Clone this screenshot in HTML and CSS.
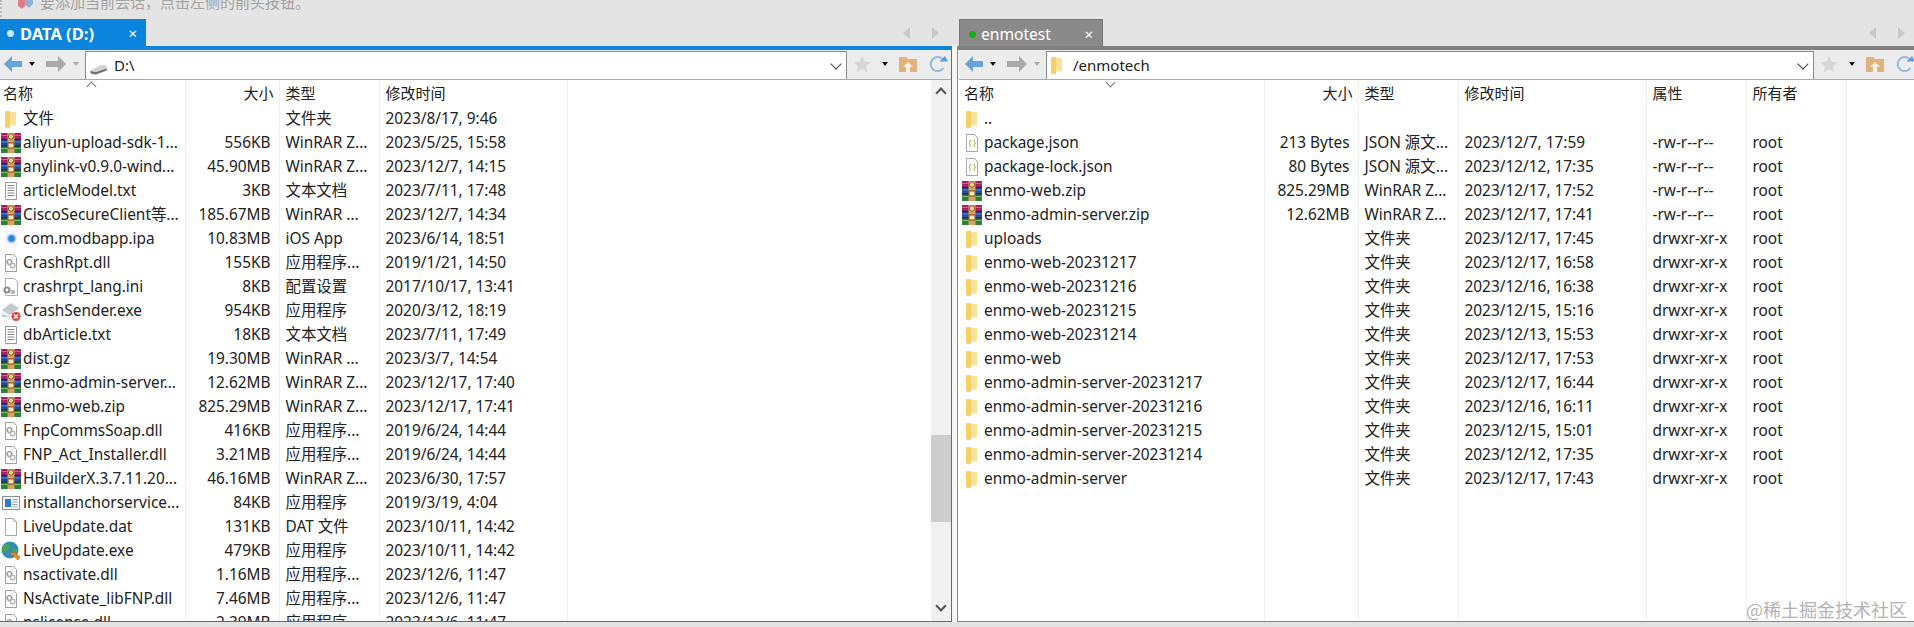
FILE: index.html
```html
<!DOCTYPE html>
<html lang="zh-CN">
<head>
    <meta charset="UTF-8">
    <title>enmotest - SFTP</title>
    <link rel="stylesheet" href="styles.css">
</head>
<body>
    <svg class="defs" width="0" height="0">
        <symbol id="rar" viewBox="0 0 20 20">
            <rect width="20" height="6.5" fill="#a3245f"/>
            <rect y="2" width="20" height="1" fill="#d85b8e"/>
            <rect y="6.5" width="20" height="6.5" fill="#26489f"/>
            <rect y="8.5" width="20" height="1" fill="#5f84d8"/>
            <rect y="13" width="20" height="7" fill="#2c7f3a"/>
            <rect y="15" width="20" height="1" fill="#6fc06f"/>
            <rect y="6" width="20" height="1" fill="#222"/>
            <rect y="12.6" width="20" height="1" fill="#222"/>
            <rect x="6.5" width="7" height="20" fill="#d9a25c"/>
            <rect x="7.5" y="1" width="5" height="5" rx="2" fill="#f4d58a" stroke="#7a4a20" stroke-width=".8"/>
            <rect x="7" y="10" width="6" height="5" fill="#f2e3b0" stroke="#5a3a18" stroke-width=".8"/>
        </symbol>
        <symbol id="folder" viewBox="0 0 20 20">
            <path d="M4 2.5 9 2v1h6v13.5H9V19l-5-.5z" fill="#fbe29a"/>
            <path d="M4 2.5 9 2v17l-5-.5z" fill="#f6cf66"/>
        </symbol>
        <symbol id="txt" viewBox="0 0 20 20">
            <path d="M4.5 1.5h11v17h-11z" fill="#fff" stroke="#9a9a9a"/>
            <path d="M6.5 4.5h7M6.5 7h7M6.5 9.500h7M6.5 12h7M6.5 14.500h7" stroke="#8a8a8a"/>
        </symbol>
        <symbol id="dll" viewBox="0 0 20 20">
            <path d="M4.5 1.500h8l3 3v14h-11z" fill="#fff" stroke="#a0a0a0"/>
            <circle cx="8.500" cy="9" r="2.400" fill="none" stroke="#9a9a9a" stroke-width="1.300"/>
            <circle cx="11.500" cy="12.500" r="2.400" fill="none" stroke="#b0b0b0" stroke-width="1.300"/>
        </symbol>
        <symbol id="ini" viewBox="0 0 20 20">
            <path d="M4.500 1.500h9l3 3v14h-12z" fill="#fff" stroke="#b0b0b0"/>
            <circle cx="6" cy="13" r="3.600" fill="#8f8f8f"/>
            <circle cx="6" cy="13" r="1.400" fill="#fff"/>
            <circle cx="12" cy="15" r="2.200" fill="#b4b4b4"/>
        </symbol>
        <symbol id="blank" viewBox="0 0 20 20">
            <path d="M4.500 1.500h8l3 3v14h-11z" fill="#fff" stroke="#a8a8a8"/>
            <path d="M12.500 1.500v3h3" fill="none" stroke="#c4c4c4"/>
        </symbol>
        <symbol id="ipa" viewBox="0 0 20 20">
            <path d="M4 1h12v18H4z" fill="#f3f7fd"/>
            <circle cx="10.500" cy="9.500" r="4.800" fill="#a8cdf2"/>
            <circle cx="10.500" cy="9.500" r="3.200" fill="#2f7fe0"/>
        </symbol>
        <symbol id="crash" viewBox="0 0 20 20">
            <path d="M1 9 10 2l8 5v9H1z" fill="#c6c9ce"/>
            <path d="M1 9l8 5 9-7v4l-9 5-8-3z" fill="#eef0f2"/>
            <circle cx="15" cy="15.500" r="4.500" fill="#dc4a3c"/>
            <path d="M13 13.500l4 4m0-4-4 4" stroke="#fff" stroke-width="1.400"/>
        </symbol>
        <symbol id="win" viewBox="0 0 20 20">
            <rect x="1.500" y="3.500" width="17" height="13" fill="#f4f6f8" stroke="#8a8f96"/>
            <rect x="4" y="6" width="6" height="8" fill="#2a78d8"/>
            <path d="M11.500 6.500h5M11.500 9h5M11.500 11.500h5M11.500 14h5" stroke="#9aa4b0"/>
        </symbol>
        <symbol id="globe" viewBox="0 0 20 20">
            <circle cx="9" cy="9" r="8.500" fill="#2a8fc4"/>
            <path d="M3 4c3-2 5-1 6 1s-1 3-3 4-2 4-4 3-1-6 1-8zM11 8c3-1 5 0 6 2l-2 4-3-1z" fill="#4ea24a"/>
            <path d="M9 11l3 1 1-1 6 5-2 3-5-5-1 2z" fill="#ec8a1e" stroke="#a85a10" stroke-width=".5"/>
        </symbol>
        <symbol id="json" viewBox="0 0 20 20">
            <path d="M4.500 1.500h8l3 3v14h-11z" fill="#fff" stroke="#a8a8a8"/>
            <path d="M9 7c-1.200 0-1 .6-1 2s-.4 1.400-1 1.500c.6.1 1 .2 1 1.500s-.2 2 1 2M11.500 7c1.200 0 1 .6 1 2s.4 1.400 1 1.500c-.6.1-1 .2-1 1.500s.2 2-1 2" fill="none" stroke="#8fae5a"/>
        </symbol>
        <symbol id="drive" viewBox="0 0 20 12">
            <path d="M1 7 13 1h5.500L19 5 7 11.500H2z" fill="#d2d2d2"/>
            <path d="M1 7.500 7 9l12-4v2L7 11.500 1.500 10z" fill="#6f6f6f"/>
        </symbol>
        <symbol id="back" viewBox="0 0 18 16">
            <path d="M8 0v5h10v6H8v5L0 8z" fill="#68a4da"/>
        </symbol>
        <symbol id="forward" viewBox="0 0 20 16">
            <path d="M12 0v5H0v6h12v5l8-8z" fill="#a9a9a9"/>
        </symbol>
        <symbol id="star" viewBox="0 0 18 18">
            <path d="M9 1l2.500 5.500 6 .7-4.500 4 1.300 6L9 14.200 3.700 17.200l1.300-6-4.500-4 6-.7z" fill="#d6d6d6"/>
        </symbol>
        <symbol id="folderup" viewBox="0 0 18 16">
            <path d="M0 1h7l2 2h9v13H0z" fill="#e3b27c"/>
            <path d="M9 6l5 5h-3v5H7v-5H4z" fill="#fbf2e6"/>
        </symbol>
        <symbol id="refresh" viewBox="0 0 20 18">
            <path d="M14.500 4A7 7 0 1 0 15.500 13" fill="none" stroke="#8dbbe4" stroke-width="2"/>
            <path d="M11.500 6.500h8.500L17 1z" fill="#5f9bd6"/>
        </symbol>
    </svg>

    <div class="hint">
        <span class="hint-dots"></span>
        <svg class="hint-flag" viewBox="0 0 16 10"><path d="M0 0h7l1 5-4 4-4-3z" fill="#e57b82"/><path d="M7 0h8v4l-4 4-3-3z" fill="#8fb0da"/></svg>
        <span class="hint-text">要添加当前会话，点击左侧的前头按钮。</span>
    </div>

    <div class="panes">
        <section class="pane pane-left">
            <div class="tabs">
                <div class="tab tab-active"><i class="dot"></i><span class="tab-title">DATA (D:)</span><span class="tab-close">×</span></div>
                <div class="tab-nav"><i class="nav-left"></i><i class="nav-right"></i></div>
            </div>
            <div class="pane-body">
                <div class="toolbar">
                    <svg class="tb-back"><use href="#back"/></svg><i class="caret"></i>
                    <svg class="tb-forward"><use href="#forward"/></svg><i class="caret caret-off"></i>
                    <div class="address">
                        <svg class="addr-drive"><use href="#drive"/></svg>
                        <span class="addr-text">D:\</span>
                        <i class="chevron"></i>
                    </div>
                    <div class="tb-right">
                        <svg class="tb-star"><use href="#star"/></svg><i class="caret"></i>
                        <svg class="tb-up"><use href="#folderup"/></svg>
                        <svg class="tb-refresh"><use href="#refresh"/></svg>
                    </div>
                </div>
                <div class="list">
                    <div class="list-main">
                        <i class="sort sort-up"></i>
                        <table class="files">
                            <colgroup><col class="c-name-l"><col class="c-size"><col class="c-type"><col class="c-time"><col></colgroup>
                            <thead><tr><th>名称</th><th class="num">大小</th><th>类型</th><th>修改时间</th><th></th></tr></thead>
                            <tbody>
                                <tr><td><svg class="ico"><use href="#folder"/></svg>文件</td><td class="num"></td><td>文件夹</td><td>2023/8/17, 9:46</td><td></td></tr>
                                <tr><td><svg class="ico"><use href="#rar"/></svg>aliyun-upload-sdk-1...</td><td class="num">556KB</td><td>WinRAR Z...</td><td>2023/5/25, 15:58</td><td></td></tr>
                                <tr><td><svg class="ico"><use href="#rar"/></svg>anylink-v0.9.0-wind...</td><td class="num">45.90MB</td><td>WinRAR Z...</td><td>2023/12/7, 14:15</td><td></td></tr>
                                <tr><td><svg class="ico"><use href="#txt"/></svg>articleModel.txt</td><td class="num">3KB</td><td>文本文档</td><td>2023/7/11, 17:48</td><td></td></tr>
                                <tr><td><svg class="ico"><use href="#rar"/></svg>CiscoSecureClient等...</td><td class="num">185.67MB</td><td>WinRAR ...</td><td>2023/12/7, 14:34</td><td></td></tr>
                                <tr><td><svg class="ico"><use href="#ipa"/></svg>com.modbapp.ipa</td><td class="num">10.83MB</td><td>iOS App</td><td>2023/6/14, 18:51</td><td></td></tr>
                                <tr><td><svg class="ico"><use href="#dll"/></svg>CrashRpt.dll</td><td class="num">155KB</td><td>应用程序...</td><td>2019/1/21, 14:50</td><td></td></tr>
                                <tr><td><svg class="ico"><use href="#ini"/></svg>crashrpt_lang.ini</td><td class="num">8KB</td><td>配置设置</td><td>2017/10/17, 13:41</td><td></td></tr>
                                <tr><td><svg class="ico"><use href="#crash"/></svg>CrashSender.exe</td><td class="num">954KB</td><td>应用程序</td><td>2020/3/12, 18:19</td><td></td></tr>
                                <tr><td><svg class="ico"><use href="#txt"/></svg>dbArticle.txt</td><td class="num">18KB</td><td>文本文档</td><td>2023/7/11, 17:49</td><td></td></tr>
                                <tr><td><svg class="ico"><use href="#rar"/></svg>dist.gz</td><td class="num">19.30MB</td><td>WinRAR ...</td><td>2023/3/7, 14:54</td><td></td></tr>
                                <tr><td><svg class="ico"><use href="#rar"/></svg>enmo-admin-server...</td><td class="num">12.62MB</td><td>WinRAR Z...</td><td>2023/12/17, 17:40</td><td></td></tr>
                                <tr><td><svg class="ico"><use href="#rar"/></svg>enmo-web.zip</td><td class="num">825.29MB</td><td>WinRAR Z...</td><td>2023/12/17, 17:41</td><td></td></tr>
                                <tr><td><svg class="ico"><use href="#dll"/></svg>FnpCommsSoap.dll</td><td class="num">416KB</td><td>应用程序...</td><td>2019/6/24, 14:44</td><td></td></tr>
                                <tr><td><svg class="ico"><use href="#dll"/></svg>FNP_Act_Installer.dll</td><td class="num">3.21MB</td><td>应用程序...</td><td>2019/6/24, 14:44</td><td></td></tr>
                                <tr><td><svg class="ico"><use href="#rar"/></svg>HBuilderX.3.7.11.20...</td><td class="num">46.16MB</td><td>WinRAR Z...</td><td>2023/6/30, 17:57</td><td></td></tr>
                                <tr><td><svg class="ico"><use href="#win"/></svg>installanchorservice...</td><td class="num">84KB</td><td>应用程序</td><td>2019/3/19, 4:04</td><td></td></tr>
                                <tr><td><svg class="ico"><use href="#blank"/></svg>LiveUpdate.dat</td><td class="num">131KB</td><td>DAT 文件</td><td>2023/10/11, 14:42</td><td></td></tr>
                                <tr><td><svg class="ico"><use href="#globe"/></svg>LiveUpdate.exe</td><td class="num">479KB</td><td>应用程序</td><td>2023/10/11, 14:42</td><td></td></tr>
                                <tr><td><svg class="ico"><use href="#dll"/></svg>nsactivate.dll</td><td class="num">1.16MB</td><td>应用程序...</td><td>2023/12/6, 11:47</td><td></td></tr>
                                <tr><td><svg class="ico"><use href="#dll"/></svg>NsActivate_libFNP.dll</td><td class="num">7.46MB</td><td>应用程序...</td><td>2023/12/6, 11:47</td><td></td></tr>
                                <tr><td><svg class="ico"><use href="#dll"/></svg>nslicense.dll</td><td class="num">2.39MB</td><td>应用程序...</td><td>2023/12/6, 11:47</td><td></td></tr>
                            </tbody>
                        </table>
                    </div>
                    <div class="scrollbar">
                        <i class="sb-up"></i>
                        <div class="sb-thumb"></div>
                        <i class="sb-down"></i>
                    </div>
                </div>
            </div>
        </section>

        <div class="gutter"></div>

        <section class="pane pane-right">
            <div class="tabs">
                <div class="tab tab-idle"><i class="dot dot-on"></i><span class="tab-title">enmotest</span><span class="tab-close">×</span></div>
                <div class="tab-nav"><i class="nav-left"></i><i class="nav-right"></i></div>
            </div>
            <div class="pane-body">
                <div class="toolbar">
                    <svg class="tb-back"><use href="#back"/></svg><i class="caret"></i>
                    <svg class="tb-forward"><use href="#forward"/></svg><i class="caret caret-off"></i>
                    <div class="address">
                        <svg class="addr-folder"><use href="#folder"/></svg>
                        <span class="addr-text">/enmotech</span>
                        <i class="chevron"></i>
                    </div>
                    <div class="tb-right">
                        <svg class="tb-star"><use href="#star"/></svg><i class="caret"></i>
                        <svg class="tb-up"><use href="#folderup"/></svg>
                        <svg class="tb-refresh"><use href="#refresh"/></svg>
                    </div>
                </div>
                <div class="list">
                    <div class="list-main">
                        <i class="sort sort-down"></i>
                        <table class="files">
                            <colgroup><col class="c-name-r"><col class="c-size"><col class="c-type"><col class="c-time"><col class="c-attr"><col class="c-attr"><col></colgroup>
                            <thead><tr><th>名称</th><th class="num">大小</th><th>类型</th><th>修改时间</th><th>属性</th><th>所有者</th><th></th></tr></thead>
                            <tbody>
                                <tr><td><svg class="ico"><use href="#folder"/></svg>..</td><td class="num"></td><td></td><td></td><td></td><td></td><td></td></tr>
                                <tr><td><svg class="ico"><use href="#json"/></svg>package.json</td><td class="num">213 Bytes</td><td>JSON 源文...</td><td>2023/12/7, 17:59</td><td>-rw-r--r--</td><td>root</td><td></td></tr>
                                <tr><td><svg class="ico"><use href="#json"/></svg>package-lock.json</td><td class="num">80 Bytes</td><td>JSON 源文...</td><td>2023/12/12, 17:35</td><td>-rw-r--r--</td><td>root</td><td></td></tr>
                                <tr><td><svg class="ico"><use href="#rar"/></svg>enmo-web.zip</td><td class="num">825.29MB</td><td>WinRAR Z...</td><td>2023/12/17, 17:52</td><td>-rw-r--r--</td><td>root</td><td></td></tr>
                                <tr><td><svg class="ico"><use href="#rar"/></svg>enmo-admin-server.zip</td><td class="num">12.62MB</td><td>WinRAR Z...</td><td>2023/12/17, 17:41</td><td>-rw-r--r--</td><td>root</td><td></td></tr>
                                <tr><td><svg class="ico"><use href="#folder"/></svg>uploads</td><td class="num"></td><td>文件夹</td><td>2023/12/17, 17:45</td><td>drwxr-xr-x</td><td>root</td><td></td></tr>
                                <tr><td><svg class="ico"><use href="#folder"/></svg>enmo-web-20231217</td><td class="num"></td><td>文件夹</td><td>2023/12/17, 16:58</td><td>drwxr-xr-x</td><td>root</td><td></td></tr>
                                <tr><td><svg class="ico"><use href="#folder"/></svg>enmo-web-20231216</td><td class="num"></td><td>文件夹</td><td>2023/12/16, 16:38</td><td>drwxr-xr-x</td><td>root</td><td></td></tr>
                                <tr><td><svg class="ico"><use href="#folder"/></svg>enmo-web-20231215</td><td class="num"></td><td>文件夹</td><td>2023/12/15, 15:16</td><td>drwxr-xr-x</td><td>root</td><td></td></tr>
                                <tr><td><svg class="ico"><use href="#folder"/></svg>enmo-web-20231214</td><td class="num"></td><td>文件夹</td><td>2023/12/13, 15:53</td><td>drwxr-xr-x</td><td>root</td><td></td></tr>
                                <tr><td><svg class="ico"><use href="#folder"/></svg>enmo-web</td><td class="num"></td><td>文件夹</td><td>2023/12/17, 17:53</td><td>drwxr-xr-x</td><td>root</td><td></td></tr>
                                <tr><td><svg class="ico"><use href="#folder"/></svg>enmo-admin-server-20231217</td><td class="num"></td><td>文件夹</td><td>2023/12/17, 16:44</td><td>drwxr-xr-x</td><td>root</td><td></td></tr>
                                <tr><td><svg class="ico"><use href="#folder"/></svg>enmo-admin-server-20231216</td><td class="num"></td><td>文件夹</td><td>2023/12/16, 16:11</td><td>drwxr-xr-x</td><td>root</td><td></td></tr>
                                <tr><td><svg class="ico"><use href="#folder"/></svg>enmo-admin-server-20231215</td><td class="num"></td><td>文件夹</td><td>2023/12/15, 15:01</td><td>drwxr-xr-x</td><td>root</td><td></td></tr>
                                <tr><td><svg class="ico"><use href="#folder"/></svg>enmo-admin-server-20231214</td><td class="num"></td><td>文件夹</td><td>2023/12/12, 17:35</td><td>drwxr-xr-x</td><td>root</td><td></td></tr>
                                <tr><td><svg class="ico"><use href="#folder"/></svg>enmo-admin-server</td><td class="num"></td><td>文件夹</td><td>2023/12/17, 17:43</td><td>drwxr-xr-x</td><td>root</td><td></td></tr>
                                <tr class="filler"><td></td><td></td><td></td><td></td><td></td><td></td><td></td></tr>
                            </tbody>
                        </table>
                    </div>
                </div>
            </div>
        </section>
    </div>

    <div class="watermark">@稀土掘金技术社区</div>
</body>
</html>
```

FILE: styles.css
```css
*{
    margin: 0;
    padding: 0;
    box-sizing: border-box;
}

html, body{
    height: 100%;
    overflow: hidden;
}

body{
    background-color: #e4e4e4;
    font-family: "Noto Sans", "Noto Sans CJK SC", sans-serif;
    font-size: 15px;
    color: #222;
    display: flex;
    flex-direction: column;
}

.defs{
    position: absolute;
}

/* top hint, cut off by the window edge */
.hint{
    height: 19px;
    flex: none;
    display: flex;
    align-items: flex-start;
    overflow: hidden;
}

.hint-dots{
    width: 2px;
    height: 17px;
    border-left: 2px dotted #bbb;
}

.hint-flag{
    width: 16px;
    height: 10px;
    margin-left: 16px;
}

.hint-text{
    margin-top: -8px;
    margin-left: 6px;
    font-size: 15px;
    line-height: 21px;
    color: #a2a2a2;
}

.panes{
    height: 603px;
    flex: none;
    display: flex;
}

.pane{
    display: flex;
    flex-direction: column;
    min-width: 0;
}

.pane-left{
    width: 956px;
    flex: none;
    margin-left: -4px;
}

.pane-right{
    flex: 1;
    margin-right: -4px;
}

.gutter{
    width: 5px;
    flex: none;
    margin-top: 27px;
    background-color: #f6f6f6;
}

/* tabs */
.tabs{
    height: 27px;
    flex: none;
    display: flex;
    justify-content: space-between;
    align-items: stretch;
}

.tab{
    display: flex;
    align-items: center;
    padding-top: 2px;
    color: #fff;
}

.tab-active{
    width: 150px;
    padding-left: 11px;
    background-color: #0a84dc;
}

.tab-active .tab-title{
    font-size: 16.5px;
    font-weight: 700;
    margin-left: 6px;
}

.tab-idle{
    width: 144px;
    margin-left: 2px;
    padding-left: 9px;
    background-color: #8a8a8a;
    border: 1px solid #777;
    border-bottom: none;
}

.tab-idle .tab-title{
    font-size: 15.6px;
    margin-left: 5px;
}

.dot{
    width: 7px;
    height: 7px;
    border-radius: 50%;
    background-color: #cfe6f8;
}

.dot-on{
    background-color: #12b012;
}

.tab-close{
    margin-left: auto;
    margin-right: 9px;
    font-size: 15px;
    line-height: 1;
}

.tab-nav{
    width: 43px;
    margin-right: 6px;
    display: flex;
    justify-content: space-between;
    align-items: center;
    padding-right: 7px;
}

.nav-left, .nav-right{
    width: 0;
    height: 0;
    border-top: 6px solid transparent;
    border-bottom: 6px solid transparent;
}

.nav-left{
    border-right: 7px solid #c9c9c9;
}

.nav-right{
    border-left: 7px solid #c9c9c9;
}

/* pane body */
.pane-body{
    flex: 1;
    min-height: 0;
    display: flex;
    flex-direction: column;
    background-color: #fff;
    border-top: 4px solid #808080;
    border-bottom: 1px solid #8a8a8a;
}

.pane-left .pane-body{
    border-top-color: #0a84dc;
    border-left: 2px solid #0a84dc;
    border-right: 1px solid #0a84dc;
    border-bottom-color: #0a84dc;
}

.pane-right .pane-body{
    border-left: 1px solid #8a8a8a;
    padding-left: 1px;
}

.toolbar{
    height: 30px;
    flex: none;
    display: flex;
    align-items: center;
    padding-bottom: 1px;
    background-color: #ececec;
    border-bottom: 1px solid #aaa;
}

.tb-back{
    width: 18px;
    height: 16px;
    margin-left: 6px;
}

.tb-forward{
    width: 20px;
    height: 16px;
    margin-left: 11px;
}

.caret{
    width: 0;
    height: 0;
    margin-left: 7px;
    border-left: 3.5px solid transparent;
    border-right: 3.5px solid transparent;
    border-top: 4px solid #111;
}

.caret-off{
    border-top-color: #aaa;
}

.address{
    flex: 1;
    height: 28px;
    margin-left: 6px;
    margin-bottom: -1px;
    align-self: flex-end;
    display: flex;
    align-items: center;
    padding-bottom: 2px;
    background-color: #fff;
    border: 1px solid #8a8a8a;
    border-bottom: none;
}

.addr-drive{
    width: 19px;
    height: 11px;
    margin: 10px 0 0 3px;
}

.addr-folder{
    width: 20px;
    height: 22px;
}

.addr-text{
    margin-left: 6px;
}

.chevron{
    width: 8px;
    height: 8px;
    margin-left: auto;
    margin-right: 6px;
    margin-top: -2px;
    border-right: 1px solid #444;
    border-bottom: 1px solid #444;
    transform: rotate(45deg);
}

.tb-right{
    width: 104px;
    flex: none;
    display: flex;
    align-items: center;
}

.tb-star{
    width: 18px;
    height: 18px;
    margin-left: 6px;
}

.tb-right .caret{
    margin-left: 11px;
}

.tb-up{
    width: 18px;
    height: 16px;
    margin-left: 11px;
}

.tb-refresh{
    width: 20px;
    height: 18px;
    margin-left: 11px;
}

/* file list */
.list{
    flex: 1;
    min-height: 0;
    display: flex;
}

.list-main{
    flex: 1;
    min-width: 0;
    position: relative;
    overflow: hidden;
}

.files{
    width: 100%;
    height: 100%;
    table-layout: fixed;
    border-collapse: collapse;
}

.c-name-l{ width: 187px; }
.c-name-r{ width: 305px; }
.c-size{ width: 94px; }
.c-type{ width: 100px; }
.c-time{ width: 188px; }
.c-attr{ width: 100px; }

.files th, .files td{
    border-right: 1px solid #eef0f0;
    white-space: nowrap;
    overflow: hidden;
    text-align: left;
    padding: 0 0 0 6px;
}

.files th{
    height: 26px;
    padding-bottom: 2px;
    font-size: 15px;
    font-weight: 400;
}

.files td{
    height: 24px;
    padding-top: 2px;
    font-size: 15.4px;
    line-height: 22px;
}

.files td:first-child{
    padding-left: 3px;
}

.files th:first-child{
    padding-left: 5px;
}

.files th.num{
    text-align: right;
    padding-right: 5px;
}

.files td.num{
    text-align: right;
    padding-right: 8px;
}

.files th:last-child, .files td:last-child{
    border-right: none;
}

.files .filler td{
    height: auto;
}

.ico{
    width: 20px;
    height: 20px;
    margin-right: 2px;
    vertical-align: -5px;
}

.sort{
    position: absolute;
    width: 7px;
    height: 7px;
    border-left: 1px solid #777;
    border-top: 1px solid #777;
}

.sort-up{
    left: 90px;
    top: 3px;
    transform: rotate(45deg);
}

.sort-down{
    left: 148px;
    top: -1px;
    transform: rotate(225deg);
}

.scrollbar{
    width: 20px;
    flex: none;
    display: flex;
    flex-direction: column;
    align-items: center;
    background-color: #f0f0f0;
}

.sb-up, .sb-down{
    width: 8px;
    height: 8px;
    border-left: 2px solid #555;
    border-top: 2px solid #555;
}

.sb-up{
    margin-top: 9px;
    transform: rotate(45deg);
}

.sb-down{
    margin-top: auto;
    margin-bottom: 11px;
    transform: rotate(225deg);
}

.sb-thumb{
    width: 100%;
    height: 87px;
    margin-top: 338px;
    background-color: #cdcdcd;
}

.watermark{
    position: absolute;
    right: 7px;
    bottom: 7px;
    font-family: "Noto Sans CJK SC", sans-serif;
    font-size: 18px;
    line-height: 22px;
    color: #b2b2b2;
}
```
